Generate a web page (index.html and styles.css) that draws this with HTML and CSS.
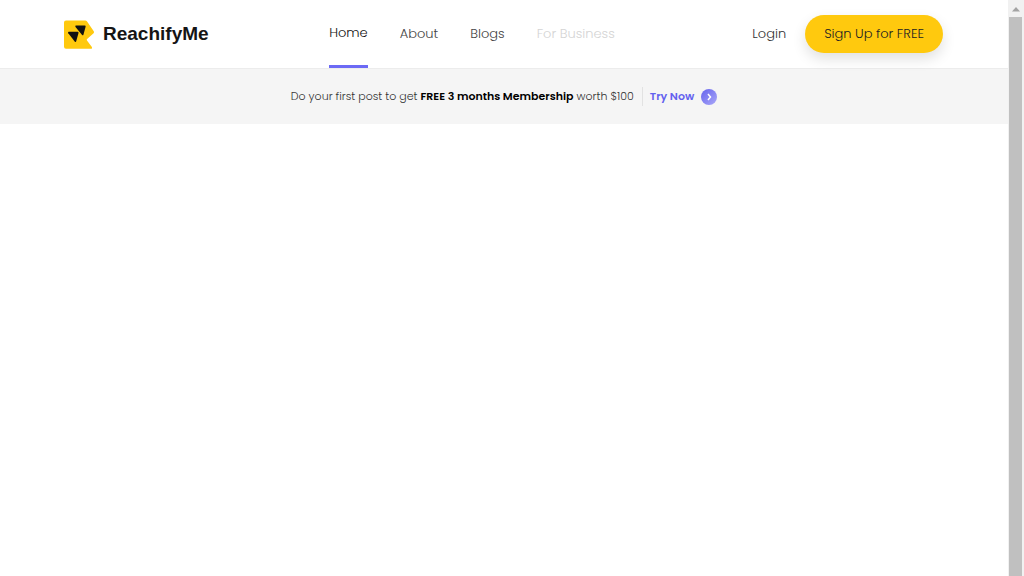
FILE: index.html
```html
<!DOCTYPE html>
<html lang="en">
<head>
<meta charset="utf-8">
<meta name="viewport" content="width=device-width, initial-scale=1">
<title>ReachifyMe</title>
<link rel="stylesheet" href="styles.css">
</head>
<body>
<div class="page">
  <header class="header">
    <a class="brand" href="#">
      <svg class="brand-mark" viewBox="0 0 30 30" aria-hidden="true">
        <path fill="#ffc90e" d="M2 1.500h19.300q1 0 1.600.8l6.700 9.800q.9 1.400-.3 2.400l-6.200 5.600q-.6.600-.1 1.300l4.700 6.400q1 2-1 2H2q-2 0-2-2V3.500q0-2 2-2z"/>
        <path fill="#111" d="M12.300 6.500h8.500q1.100 0 .8 1.200l-2.100 7.700q-.5 1.600-1.600.4l-6.400-7.900q-.9-1.400.8-1.400z"/>
        <path fill="#111" d="M5 12.800h8.500q1.300 0 1 1.200l-2.300 8.200q-.5 1.500-1.500.3l-6.400-8.300q-.9-1.400.7-1.400z"/>
      </svg>
      <span class="brand-name">ReachifyMe</span>
    </a>
    <nav class="nav" aria-label="Main">
      <a class="nav-link nav-link-active" href="#" aria-current="page">Home</a>
      <a class="nav-link" href="#">About</a>
      <a class="nav-link" href="#">Blogs</a>
      <a class="nav-link nav-link-muted" href="#">For Business</a>
    </nav>
    <div class="account">
      <a class="login" href="#">Login</a>
      <button class="signup" type="button">Sign Up for FREE</button>
    </div>
  </header>
  <section class="promo">
    <p class="promo-text">Do your first post to get <strong>FREE 3 months Membership</strong> worth $100</p>
    <a class="promo-link" href="#">Try Now
      <svg class="promo-icon" viewBox="0 0 16 16" aria-hidden="true">
        <defs><linearGradient id="disc" x1="0" y1="0" x2="1" y2="1"><stop offset="0" stop-color="#6563ed"/><stop offset="1" stop-color="#aaa8f8"/></linearGradient></defs>
        <circle cx="8" cy="8" r="8" fill="url(#disc)"/>
        <path d="M7 5 9.500 8 7 11" fill="none" stroke="#fff" stroke-width="1.500"/>
      </svg>
    </a>
  </section>
</div>
<div class="scrollbar" aria-hidden="true">
  <svg class="scroll-arrow" viewBox="0 0 16 17"><path d="M4 11.500 8 7l4 4.500z" fill="#a3a3a3"/></svg>
  <div class="scroll-thumb"></div>
</div>
</body>
</html>
```
FILE: styles.css
```css
* {
  box-sizing: border-box;
}

body {
  display: flex;
  min-height: 100vh;
  margin: 0;
  background: #fff;
  color: #333;
  font-family: Poppins, Inter, "Open Sans", sans-serif;
  font-size: 13px;
  font-weight: 300;
}

a {
  color: inherit;
  text-decoration: none;
}

.page {
  flex: 1;
}

.header {
  display: grid;
  grid-template-columns: 1fr auto 1fr;
  align-items: center;
  padding: 0 65px 0 64px;
  border-bottom: 1px solid #ececec;
}

.brand {
  display: flex;
  align-items: center;
  gap: 9px;
}

.brand-mark {
  width: 30px;
  height: 30px;
}

.brand-name {
  color: #151515;
  font: bold 19px "Liberation Sans", Arial, sans-serif;
}

.nav {
  display: flex;
  gap: 32px;
  padding-right: 63px;
}

.nav-link {
  color: #444;
  line-height: 68px;
}

.nav-link-active {
  border-bottom: 3px solid #6c6af5;
  color: #111;
  line-height: 65px;
}

.nav-link-muted {
  color: #d4d4d4;
}

.account {
  display: flex;
  align-items: center;
  justify-content: flex-end;
  gap: 19px;
}

.signup {
  padding: 0 19px;
  border: 0;
  border-radius: 20px;
  background: #ffc90e;
  box-shadow: 0 6px 14px rgba(0, 0, 0, 0.12);
  color: #222;
  font: inherit;
  line-height: 38px;
  white-space: nowrap;
}

.promo {
  display: flex;
  align-items: center;
  justify-content: center;
  gap: 8px;
  padding: 18px 16px;
  background: #f5f5f5;
  font-size: 11px;
  line-height: 19px;
}

.promo-text {
  margin: 0;
}

.promo strong {
  color: #000;
  font-weight: 600;
}

.promo-link {
  display: flex;
  align-items: center;
  gap: 7px;
  padding-left: 7px;
  border-left: 1px solid #e2e2e2;
  color: #6361ef;
  font-weight: 600;
}

.promo-icon {
  width: 16px;
  height: 16px;
}

.scrollbar {
  display: flex;
  flex-direction: column;
  width: 16px;
  background: #f1f1f1;
}

.scroll-arrow {
  width: 16px;
  height: 17px;
}

.scroll-thumb {
  flex: 1;
  margin: 0 2px 0 1px;
  background: #c0c0c0;
}
```
